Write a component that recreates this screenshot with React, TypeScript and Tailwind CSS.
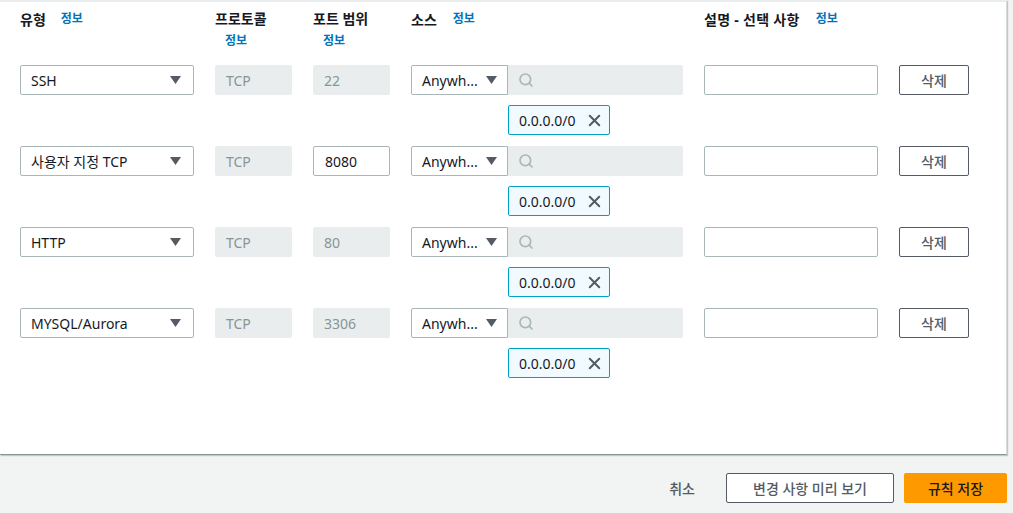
import { Search, X } from "lucide-react";

type Rule = { type: string; port: string; portEditable?: boolean };

const rules: Rule[] = [
  { type: "SSH", port: "22" },
  { type: "사용자 지정 TCP", port: "8080", portEditable: true },
  { type: "HTTP", port: "80" },
  { type: "MYSQL/Aurora", port: "3306" },
];

const cols = "grid grid-cols-[174px_77px_77px_272px_174px_70px] gap-x-[21px]";

function Caret() {
  return (
    <svg width="11" height="8" viewBox="0 0 11 8" className="shrink-0">
      <path d="M0 0 L11 0 L5.5 8 Z" fill="#545b64" />
    </svg>
  );
}

function Info() {
  return <span className="text-[12px] font-semibold text-[#0073bb]">정보</span>;
}

function RuleRow({ rule }: { rule: Rule }) {
  return (
    <div className={cols + " h-[81px]"}>
      <div className="h-[30px] rounded-[2px] border border-[#aab7b8] bg-white pl-[10px] pr-[12px] flex items-center justify-between">
        <span className="text-[14px] text-[#16191f]">{rule.type}</span>
        <Caret />
      </div>
      <div className="h-[30px] rounded-[2px] bg-[#eaeded] pl-[11px] flex items-center text-[14px] text-[#879596]">
        TCP
      </div>
      {rule.portEditable ? (
        <div className="h-[30px] rounded-[2px] border border-[#aab7b8] bg-white pl-[11px] flex items-center text-[14px] text-[#16191f]">
          {rule.port}
        </div>
      ) : (
        <div className="h-[30px] rounded-[2px] bg-[#eaeded] pl-[11px] flex items-center text-[14px] text-[#879596]">
          {rule.port}
        </div>
      )}
      <div className="flex flex-col">
        <div className="flex h-[30px]">
          <div className="w-[97px] rounded-l-[2px] border border-[#aab7b8] bg-white pl-[10px] pr-[10px] flex items-center justify-between">
            <span className="text-[14px] text-[#16191f]">Anywh...</span>
            <Caret />
          </div>
          <div className="flex-1 rounded-r-[2px] bg-[#eaeded] pl-[10px] flex items-center">
            <Search size={16} strokeWidth={2.5} color="#aab7b8" />
          </div>
        </div>
        <div className="ml-[97px] mt-[10px] w-[102px] h-[30px] rounded-[2px] border border-[#00a1c9] bg-[#f1faff] pl-[10px] pr-[5px] flex items-center justify-between">
          <span className="text-[14px] text-[#16191f]">0.0.0.0/0</span>
          <X size={19} strokeWidth={2.5} color="#545b64" />
        </div>
      </div>
      <div className="h-[30px] rounded-[2px] border border-[#aab7b8] bg-white" />
      <div className="h-[30px] rounded-[2px] border border-[#545b64] bg-white flex items-center justify-center text-[14px] font-medium text-[#545b64]">
        삭제
      </div>
    </div>
  );
}

export default function App() {
  return (
    <div
      className="w-[1013px] h-[513px] bg-[#f2f3f3] overflow-hidden"
      style={{ fontFamily: '"Noto Sans", "Noto Sans CJK KR", sans-serif' }}
    >
      <div className="w-[1007px] h-[455px] bg-white border-t-2 border-t-[#eaeded] border-r border-r-[#d5dbdb] border-b border-b-[#879596] shadow-[1px_1px_1px_rgba(0,28,36,0.2)] pl-[20px]">
        <div className={cols + " h-[63px] pt-[7px]"}>
          <div className="flex items-center gap-[15px] h-[20px]">
            <span className="text-[14px] font-bold text-[#16191f]">유형</span>
            <Info />
          </div>
          <div className="flex flex-col">
            <span className="text-[14px] font-bold text-[#16191f] h-[20px] leading-[20px]">프로토콜</span>
            <span className="pl-[10px] h-[20px] leading-[20px]"><Info /></span>
          </div>
          <div className="flex flex-col">
            <span className="text-[14px] font-bold text-[#16191f] h-[20px] leading-[20px]">포트 범위</span>
            <span className="pl-[10px] h-[20px] leading-[20px]"><Info /></span>
          </div>
          <div className="flex items-center gap-[16px] h-[20px]">
            <span className="text-[14px] font-bold text-[#16191f]">소스</span>
            <Info />
          </div>
          <div className="flex items-center gap-[16px] h-[20px] col-span-2">
            <span className="text-[14px] font-bold text-[#16191f] tracking-[0.3px]">설명 - 선택 사항</span>
            <Info />
          </div>
        </div>
        {rules.map((r) => (
          <RuleRow key={r.type} rule={r} />
        ))}
      </div>
      <div className="w-[1007px] flex items-center justify-end mt-[18px]">
        <span className="text-[14px] font-medium text-[#545b64] mr-[31px]">취소</span>
        <div className="w-[168px] h-[30px] rounded-[2px] border border-[#545b64] bg-white flex items-center justify-center text-[14px] font-medium text-[#545b64] mr-[10px]">
          변경 사항 미리 보기
        </div>
        <div className="w-[103px] h-[30px] rounded-[2px] bg-[#ff9900] flex items-center justify-center text-[14px] font-medium text-[#16191f]">
          규칙 저장
        </div>
      </div>
    </div>
  );
}
